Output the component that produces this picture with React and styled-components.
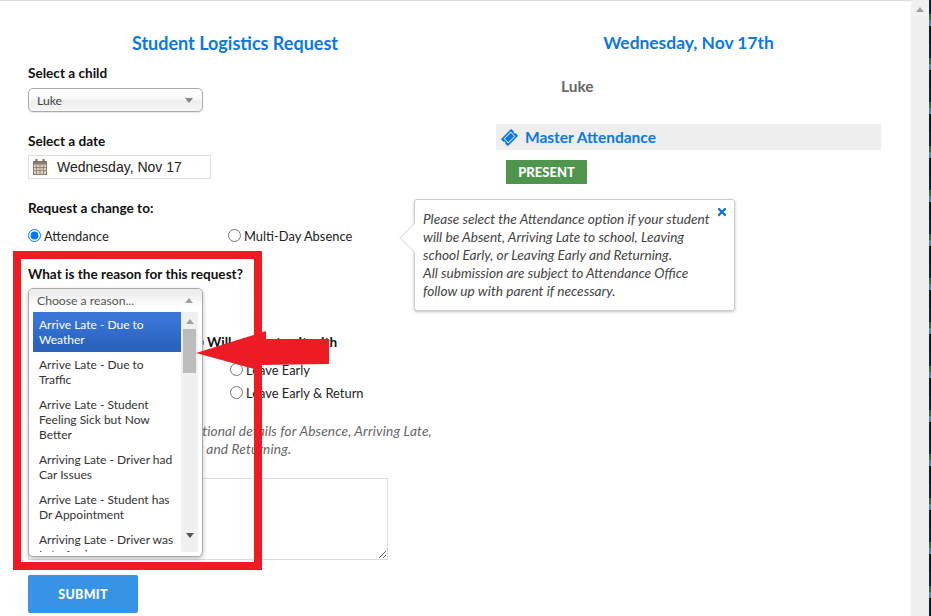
import React from "react";
import styled, { createGlobalStyle } from "styled-components";
import { FaTicketAlt, FaTimes } from "react-icons/fa";

const GlobalStyle = createGlobalStyle`
  html, body {
    margin: 0;
    padding: 0;
    height: 616px;
    overflow: hidden;
    background: #fff;
    font-family: Lato, "Open Sans", sans-serif;
  }
  * {
    box-sizing: border-box;
  }
`;

const Page = styled.div`
  display: flex;
  width: 931px;
  height: 616px;
  overflow: hidden;
`;
const Main = styled.main`
  position: relative;
  flex: 1;
  display: flex;
  border-top: 1px solid #ddd;
  padding: 30px 30px 0 28px;
`;
const PageScroll = styled.div`
  width: 18px;
  background: #f0f0f0;
  display: flex;
  justify-content: center;
  padding-top: 7px;
`;
const Backdrop = styled.div`
  width: 2px;
  background: repeating-linear-gradient(180deg, #10232e 0 14px, #41604f 14px 20px, #5f7f9c 20px 26px, #0e1c22 26px 44px);
`;
const ArrowUp = styled.span`
  width: 0;
  height: 0;
  border-left: 4px solid transparent;
  border-right: 4px solid transparent;
  border-bottom: 5px solid ${({ color }) => color || "#a0a0a0"};
`;
const ArrowDown = styled.span`
  width: 0;
  height: 0;
  border-left: 4px solid transparent;
  border-right: 4px solid transparent;
  border-top: 5px solid ${({ color }) => color || "#777"};
`;

const LeftColumn = styled.section`
  width: 414px;
  margin-right: 54px;
`;
const RightColumn = styled.section`
  width: 385px;
`;
const Title = styled.h1`
  margin: 0;
  font-size: ${({ size }) => size}px;
  line-height: 24px;
  font-weight: 700;
  text-align: center;
  color: #0b78e3;
`;
const Label = styled.div`
  display: flex;
  align-items: center;
  font-size: 13.6px;
  line-height: 18px;
  font-weight: 700;
  color: #111;
  margin-top: ${({ top }) => top}px;
  input {
    width: 13px;
    height: 13px;
    margin: 0 3px 0 -16px;
  }
`;
const ChosenBox = styled.div`
  position: relative;
  width: 175px;
  height: ${({ h }) => h || 24}px;
  margin-top: ${({ top }) => top}px;
`;
const ChosenHead = styled.div`
  height: 24px;
  display: flex;
  align-items: center;
  justify-content: space-between;
  padding: 0 9px 0 8px;
  border: 1px solid #aaa;
  border-radius: 5px;
  background: linear-gradient(#fff 20%, #f6f6f6 50%, #eee 52%, #f4f4f4 100%);
  box-shadow: inset 0 0 3px #fff, 0 1px 1px rgba(0, 0, 0, 0.1);
  font-size: 12.2px;
  color: #444;
`;
const DateField = styled.div`
  width: 183px;
  height: 24px;
  margin-top: 5px;
  display: flex;
  align-items: center;
  gap: 10px;
  padding-left: 4px;
  border: 1px solid #ddd;
  font-family: "Liberation Sans", Arial, sans-serif;
  font-size: 14px;
  color: #222;
`;
const RadioRow = styled.div`
  display: flex;
  margin-top: 9px;
  height: 19px;
`;
const RadioLabel = styled.label`
  display: flex;
  align-items: center;
  gap: 3px;
  width: ${({ w }) => w || "auto"};
  height: 19px;
  font-size: 12.9px;
  color: #222;
  margin-top: ${({ top }) => top || 0}px;
  margin-left: ${({ left }) => left || 0}px;
  input {
    width: 13px;
    height: 13px;
    margin: 0;
  }
`;
const Dropdown = styled.div`
  position: absolute;
  z-index: 3;
  inset: 0 0 auto 0;
  height: 269px;
  background: #fff;
  border: 1px solid #aaa;
  border-radius: 5px;
  box-shadow: 0 2px 4px rgba(0, 0, 0, 0.25);
`;
const DropHead = styled.div`
  height: 23px;
  display: flex;
  align-items: center;
  justify-content: space-between;
  padding: 0 9px 0 8px;
  border-radius: 5px 5px 0 0;
  background: linear-gradient(#eee 20%, #fff 80%);
  font-size: 12.2px;
  color: #555;
`;
const DropBody = styled.div`
  display: flex;
  height: 240px;
  margin-left: 4px;
  width: 165px;
  overflow: hidden;
`;
const OptionList = styled.ul`
  flex: 1;
  margin: 0;
  padding: 0;
  list-style: none;
  overflow: hidden;
`;
const Option = styled.li`
  padding: 5px 6px;
  font-size: 12px;
  line-height: 15px;
  white-space: nowrap;
  color: ${({ selected }) => (selected ? "#fff" : "#333")};
  background: ${({ selected }) => (selected ? "linear-gradient(#3875d7 20%, #2a62bc 90%)" : "#fff")};
`;
const ListScroll = styled.div`
  width: 17px;
  background: #f0f0f0;
  display: flex;
  flex-direction: column;
  align-items: center;
  padding-top: 7px;
`;
const Thumb = styled.div`
  width: 13px;
  height: 44px;
  margin-top: 5px;
  margin-bottom: 160px;
  background: #bcbcbc;
`;
const WithColumn = styled.div`
  margin-left: 179px;
`;
const Hint = styled.p`
  margin: 20px 0 0 4px;
  font-size: 13.7px;
  line-height: 18px;
  letter-spacing: 0.14px;
  white-space: nowrap;
  font-style: italic;
  color: #666;
`;
const Notes = styled.textarea`
  display: block;
  width: 360px;
  height: 82px;
  margin-top: 20px;
  border: 1px solid #ddd;
  background: #fff;
`;
const SubmitButton = styled.button`
  display: block;
  width: 110px;
  height: 38px;
  margin-top: 15px;
  border: 0;
  border-radius: 2px;
  background: #3892e5;
  color: #fff;
  font-family: inherit;
  font-size: 12.5px;
  font-weight: 900;
  letter-spacing: 0.3px;
`;
const ChildName = styled.div`
  margin: 19px 0 0 65px;
  font-size: 15.5px;
  line-height: 24px;
  font-weight: 700;
  color: #666;
`;
const SectionBar = styled.div`
  height: 26px;
  margin-top: 26px;
  display: flex;
  align-items: center;
  gap: 8px;
  padding-left: 6px;
  background: #eee;
  color: #0b78e3;
  font-size: 15.5px;
  font-weight: 700;
`;
const StatusBadge = styled.div`
  width: 81px;
  height: 24px;
  margin: 10px 0 0 10px;
  display: flex;
  align-items: center;
  justify-content: center;
  background: #4f954e;
  color: #fff;
  font-size: 13px;
  font-weight: 900;
`;
const Popover = styled.aside`
  position: absolute;
  z-index: 1;
  left: 414px;
  top: 198px;
  width: 321px;
  height: 112px;
  padding: 10px 8px;
  background: #fff;
  border: 1px solid #ccc;
  border-radius: 3px;
  box-shadow: 0 1px 3px rgba(0, 0, 0, 0.25);
  font-size: 13.7px;
  line-height: 18px;
  white-space: nowrap;
  font-style: italic;
  color: #444;
  &::before {
    content: "";
    position: absolute;
    left: -11px;
    top: 27px;
    width: 21px;
    height: 21px;
    transform: rotate(45deg);
    background: #fff;
    border-left: 1px solid #ddd;
    border-bottom: 1px solid #ddd;
  }
  span {
    position: relative;
  }
`;
const CloseIcon = styled(FaTimes)`
  position: absolute;
  right: 6px;
  top: 6px;
  color: #0b6fd6;
  font-size: 12px;
`;
const RedFrame = styled.div`
  position: absolute;
  z-index: 4;
  left: 13px;
  top: 250px;
  width: 249px;
  height: 319px;
  border: 8px solid #ed1c24;
`;
const RedArrow = styled.svg`
  position: absolute;
  z-index: 5;
  left: 196px;
  top: 329px;
`;

const CalendarIcon = () => (
  <svg width="14" height="16" viewBox="0 0 14 16">
    <rect x="0.5" y="2.5" width="13" height="13" fill="#d9cdbb" stroke="#8a7f72" />
    <rect x="0.5" y="2.5" width="13" height="3" fill="#8a7f72" />
    <path d="M3.5 0v4M10.5 0v4" stroke="#7a7066" strokeWidth="2" />
    <path d="M0 8.5h14M0 11.5h14M3.5 6v10M7 6v10M10.5 6v10" stroke="#8a7f72" strokeWidth="0.8" />
  </svg>
);

const reasons = [
  ["Arrive Late - Due to", "Weather"],
  ["Arrive Late - Due to", "Traffic"],
  ["Arrive Late - Student", "Feeling Sick but Now", "Better"],
  ["Arriving Late - Driver had", "Car Issues"],
  ["Arrive Late - Student has", "Dr Appointment"],
  ["Arriving Late - Driver was", "Late Again"],
];

const App = () => {
  return (
    <Page>
      <GlobalStyle />
      <Main>
        <LeftColumn>
          <Title size={18}>Student Logistics Request</Title>
          <Label top={9}>Select a child</Label>
          <ChosenBox top={6}>
            <ChosenHead>
              Luke
              <ArrowDown color="#888" />
            </ChosenHead>
          </ChosenBox>
          <Label top={20}>Select a date</Label>
          <DateField>
            <CalendarIcon />
            Wednesday, Nov 17
          </DateField>
          <Label top={20}>Request a change to:</Label>
          <RadioRow>
            <RadioLabel w="200px">
              <input type="radio" name="change" defaultChecked />
              Attendance
            </RadioLabel>
            <RadioLabel>
              <input type="radio" name="change" />
              Multi-Day Absence
            </RadioLabel>
          </RadioRow>
          <Label top={20}>What is the reason for this request?</Label>
          <ChosenBox top={5} h={23}>
            <Dropdown>
              <DropHead>
                Choose a reason...
                <ArrowUp />
              </DropHead>
              <DropBody>
                <OptionList>
                  {reasons.map((lines, i) => (
                    <Option key={i} selected={i === 0}>
                      {lines.map((line, j) => (
                        <div key={j}>{line}</div>
                      ))}
                    </Option>
                  ))}
                </OptionList>
                <ListScroll>
                  <ArrowUp />
                  <Thumb />
                  <ArrowDown color="#555" />
                </ListScroll>
              </DropBody>
            </Dropdown>
          </ChosenBox>
          <WithColumn>
            <Label top={22}>
              <input type="radio" name="with" defaultChecked />
              Will student exit with
            </Label>
            <RadioLabel left={23} top={9}>
              <input type="radio" name="leave" />
              Leave Early
            </RadioLabel>
            <RadioLabel left={23} top={4}>
              <input type="radio" name="leave" />
              Leave Early &amp; Return
            </RadioLabel>
          </WithColumn>
          <Hint>
            Please provide any other additional details for Absence, Arriving Late,
            <br />
            Leaving Early or Leaving Early and Returning.
          </Hint>
          <Notes />
          <SubmitButton>SUBMIT</SubmitButton>
        </LeftColumn>
        <RightColumn>
          <Title size={17.4}>Wednesday, Nov 17th</Title>
          <ChildName>Luke</ChildName>
          <SectionBar>
            <FaTicketAlt size={15} style={{ transform: "rotate(-45deg)" }} />
            Master Attendance
          </SectionBar>
          <StatusBadge>PRESENT</StatusBadge>
        </RightColumn>
        <Popover>
          <span>
            Please select the Attendance option if your student
            <br />
            will be Absent, Arriving Late to school, Leaving
            <br />
            school Early, or Leaving Early and Returning.
            <br />
            All submission are subject to Attendance Office
            <br />
            follow up with parent if necessary.
          </span>
          <CloseIcon />
        </Popover>
        <RedFrame />
        <RedArrow width="134" height="42" viewBox="0 0 134 42">
          <polygon points="0,23 70,1 70,9 133,9 133,34 66,35 62,40" fill="#ed1c24" />
        </RedArrow>
      </Main>
      <PageScroll>
        <ArrowUp />
      </PageScroll>
      <Backdrop />
    </Page>
  );
};

export default App;
